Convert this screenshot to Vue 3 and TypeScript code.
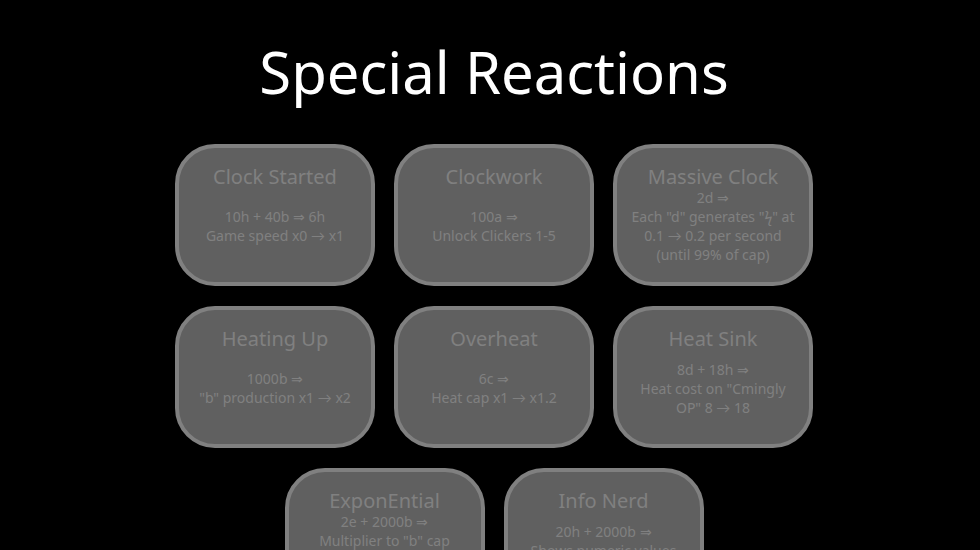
<script setup lang="ts">
interface Reaction {
  name: string
  lines: string[]
}

const reactions: Reaction[] = [
  { name: 'Clock Started', lines: ['10h + 40b ⇒ 6h', 'Game speed x0 → x1'] },
  { name: 'Clockwork', lines: ['100a ⇒', 'Unlock Clickers 1-5'] },
  { name: 'Massive Clock', lines: ['2d ⇒', 'Each "d" generates "ϟ" at 0.1 → 0.2 per second (until 99% of cap)'] },
  { name: 'Heating Up', lines: ['1000b ⇒', '"b" production x1 → x2'] },
  { name: 'Overheat', lines: ['6c ⇒', 'Heat cap x1 → x1.2'] },
  { name: 'Heat Sink', lines: ['8d + 18h ⇒', 'Heat cost on "Cmingly OP" 8 → 18'] },
  { name: 'ExponEntial', lines: ['2e + 2000b ⇒', 'Multiplier to "b" cap', 'based on "e"', 'x1 → x2'] },
  { name: 'Info Nerd', lines: ['20h + 2000b ⇒', 'Shows numeric values', 'on bars'] },
]
</script>

<template>
  <main class="page">
    <h1 class="title">Special Reactions</h1>
    <section class="reactions">
      <button v-for="reaction in reactions" :key="reaction.name" class="reaction" type="button" disabled>
        <span class="name">{{ reaction.name }}</span>
        <span class="effect">
          <span v-for="line in reaction.lines" :key="line" class="line">{{ line }}</span>
        </span>
      </button>
    </section>
  </main>
</template>

<style>
body {
  background: #000;
}
</style>

<style scoped>
.page {
  box-sizing: border-box;
  min-height: 100vh;
  padding: 32px 0 16px 8px;
  background: #000;
  font-family: "Noto Sans", Lato, sans-serif;
}
.title {
  margin: 0 0 32px;
  color: #fff;
  font-size: 58px;
  font-weight: 400;
  line-height: 80px;
  text-align: center;
}
.reactions {
  display: flex;
  flex-wrap: wrap;
  justify-content: center;
  gap: 20px 19px;
  max-width: 640px;
  margin: 0 auto;
}
.reaction {
  display: flex;
  flex-direction: column;
  box-sizing: border-box;
  width: 200px;
  height: 142px;
  padding: 15px 10px;
  border: 4px solid #808080;
  border-radius: 40px;
  background: #606060;
  color: #808080;
  font-family: inherit;
  text-align: center;
}
.name {
  font-size: 20px;
  line-height: 27px;
}
.effect {
  display: flex;
  flex-direction: column;
  justify-content: center;
  height: 76px;
  margin-top: -2px;
  font-size: 14px;
  line-height: 19px;
}
.line {
  display: block;
}
</style>
